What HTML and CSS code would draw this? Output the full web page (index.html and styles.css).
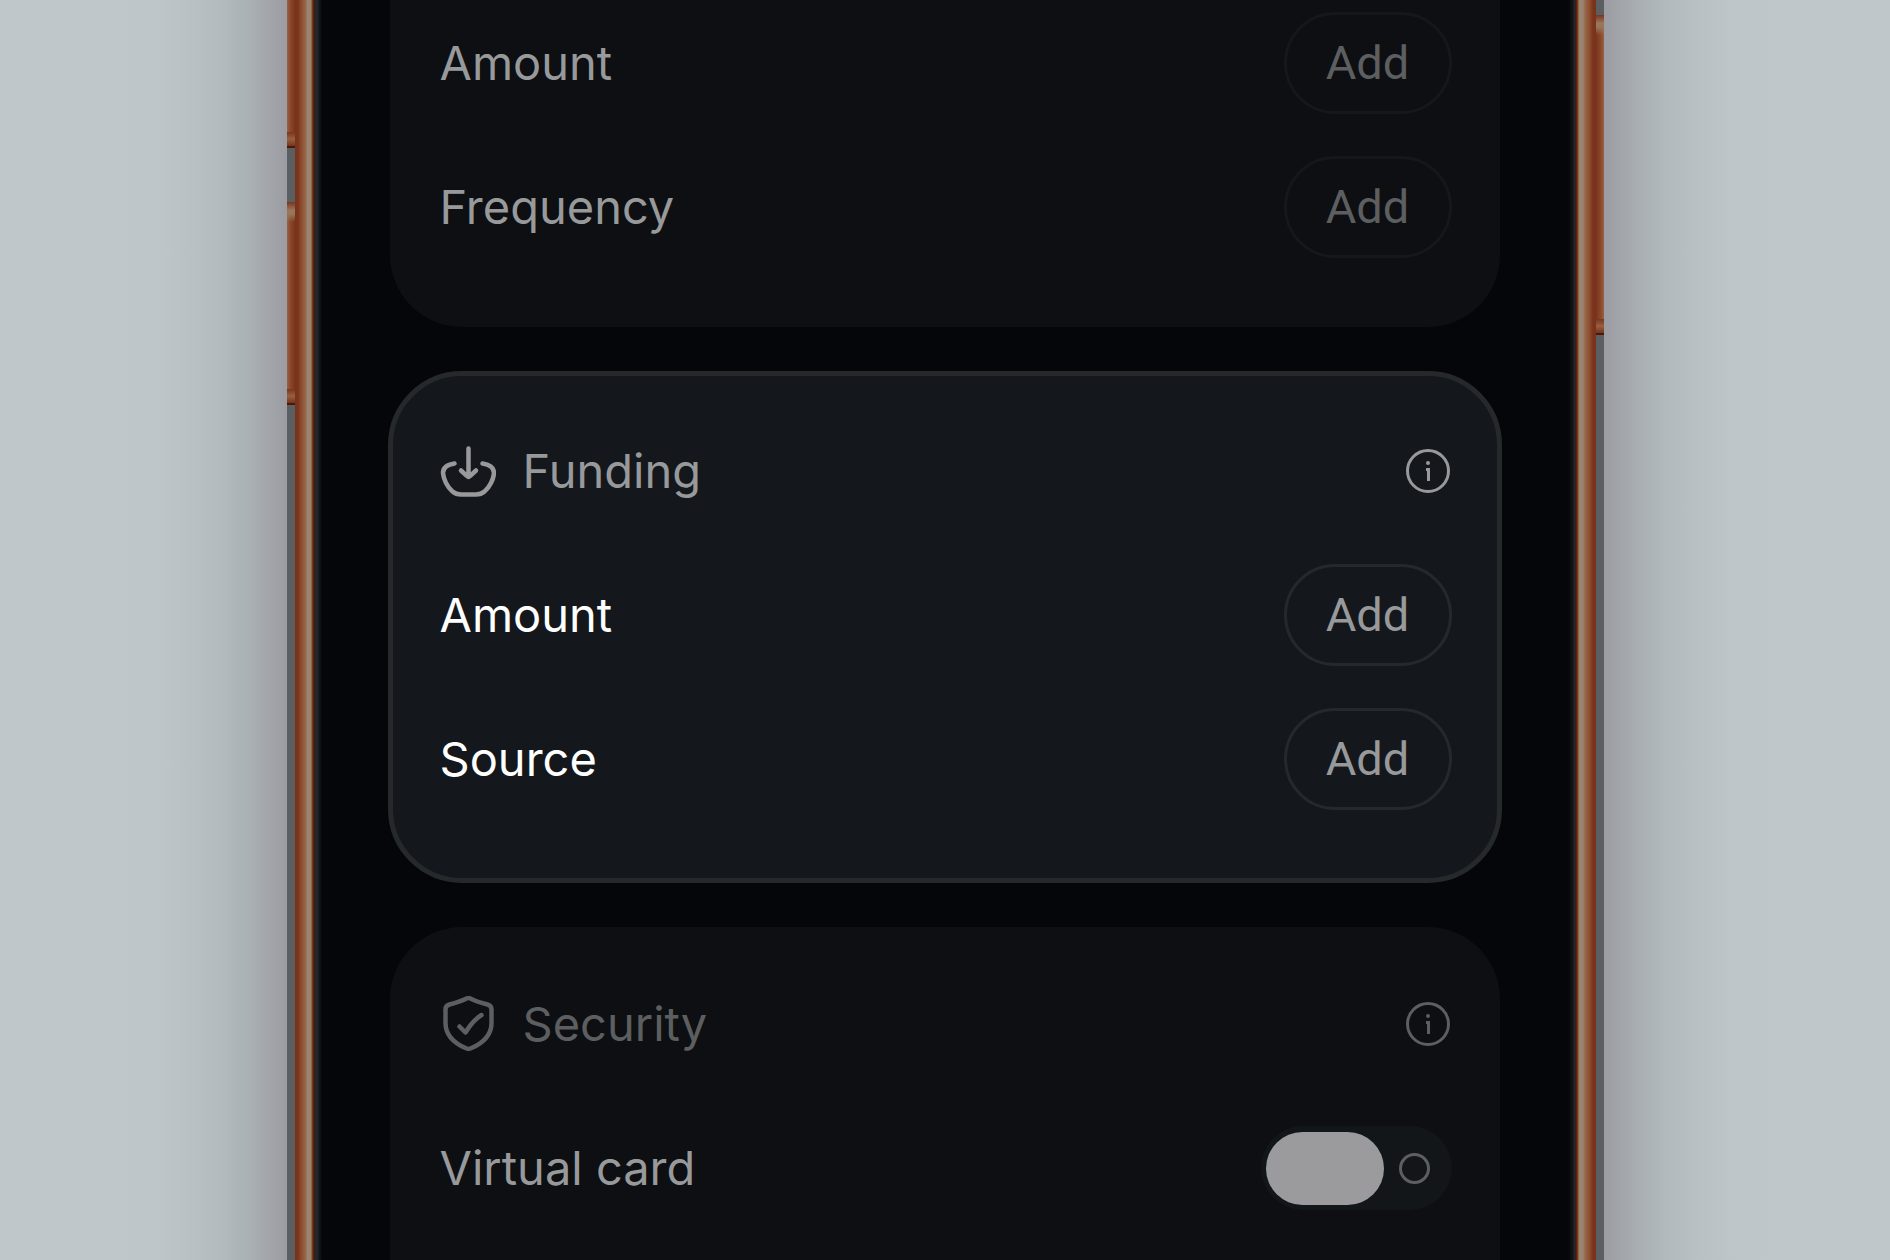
FILE: index.html
```html
<!DOCTYPE html>
<html lang="en">
<head>
  <meta charset="UTF-8">
  <meta name="viewport" content="width=device-width, initial-scale=1">
  <title>Card setup</title>
  <link rel="stylesheet" href="styles.css">
</head>
<body>
  <div class="stage">
    <div class="shade shade-left"></div>

    <div class="phone">
      <div class="keys keys-left">
        <span class="key key-up"></span>
        <span class="key key-down"></span>
      </div>
      <div class="rail rail-left"></div>

      <main class="screen">
        <section class="card card-first dimmed">
          <div class="row">
            <span class="label">Amount</span>
            <button class="add" type="button">Add</button>
          </div>
          <div class="row">
            <span class="label">Frequency</span>
            <button class="add" type="button">Add</button>
          </div>
        </section>

        <section class="card card-active">
          <div class="row">
            <h2 class="title">
              <svg class="icon" viewBox="0 0 56 56" aria-hidden="true">
                <path d="M14.500 20.500C8 21.500 3 24.500 3 30C3.500 36 7 44 12.500 48.500C15 50.700 17.500 51.500 21 51.500H36C39.500 51.500 42 50.700 44.500 48.500C50 44 53.500 36 54 30C54 24.500 49 21.500 42.500 20.500"/>
                <path d="M28.500 5.500V34M21 27.500L26.500 32.700Q28.500 34.600 30.500 32.700L36 27.500"/>
              </svg>
              Funding
            </h2>
            <button class="info" type="button" aria-label="About funding">
              <svg viewBox="0 0 44 44" aria-hidden="true">
                <circle cx="22" cy="22" r="20.500"/>
                <path d="M20 20.500H22.500V32"/>
                <circle class="dot" cx="22" cy="14" r="2"/>
              </svg>
            </button>
          </div>
          <div class="row">
            <span class="label">Amount</span>
            <button class="add" type="button">Add</button>
          </div>
          <div class="row">
            <span class="label">Source</span>
            <button class="add" type="button">Add</button>
          </div>
        </section>

        <section class="card card-last dimmed">
          <div class="row">
            <h2 class="title">
              <svg class="icon" viewBox="0 0 56 56" aria-hidden="true">
                <path d="M26.500 2.600Q28.500 1.600 30.500 2.600C36 5.500 41 7 47.500 8.500Q51.500 9.500 51.500 13.500V27C51.500 40 41 48 31 52.300Q28.500 53.500 26 52.300C16 48 5.500 40 5.500 27V13.500Q5.500 9.500 9.500 8.500C16 7 21 5.500 26.500 2.600Z"/>
                <path d="M19.500 30.500L25.500 36.500C30 29 35 23 41.500 19"/>
              </svg>
              Security
            </h2>
            <button class="info" type="button" aria-label="About security">
              <svg viewBox="0 0 44 44" aria-hidden="true">
                <circle cx="22" cy="22" r="20.500"/>
                <path d="M20 20.500H22.500V32"/>
                <circle class="dot" cx="22" cy="14" r="2"/>
              </svg>
            </button>
          </div>
          <div class="row">
            <label class="label" for="virtualCard">Virtual card</label>
            <input class="switch" type="checkbox" role="switch" id="virtualCard">
          </div>
        </section>
      </main>

      <div class="rail rail-right"></div>
      <div class="keys keys-right">
        <span class="key key-power"></span>
      </div>
    </div>

    <div class="shade shade-right"></div>
  </div>
</body>
</html>
```
FILE: styles.css
```css
* { box-sizing: border-box; }

body { margin: 0; background: #c0c7ca; font-family: Inter, "Liberation Sans", sans-serif; }

.stage { display: flex; height: 100vh; overflow: hidden; }

/* soft shadow on both sides of the device */
.shade { flex: 1; }
.shade-left { background: linear-gradient(to left, #9c9ca2 0, #a2a6aa 18px, #a9afb3 36px, #b1b9bc 60px, #b9c0c3 90px, #bec5c8 125px, #c0c7ca 170px); }
.shade-right { background: linear-gradient(to right, #9c9ca2 0, #a2a6aa 18px, #a9afb3 36px, #b1b9bc 60px, #b9c0c3 90px, #bec5c8 125px, #c0c7ca 170px); }

.phone { display: flex; width: 100%; max-width: 1317px; background: #04060a; }

.keys { display: flex; flex-direction: column; width: 8px; background: #5b5f61; }
.key { display: flex; flex: none; flex-direction: column; justify-content: space-between; }
.keys-left .key { background: linear-gradient(to right, #966346 0, #8c4a2c 3px, #7a341c 8px); }
.keys-right .key { background: linear-gradient(to left, #966346 0, #8c4a2c 3px, #7a341c 8px); }
.key-up { height: 148px; }
.key-down { height: 203px; margin-top: 54px; }
.key-power { height: 320px; margin-top: 15px; }
.key::before, .key::after { content: ""; display: block; }
.key::before { height: 20px; background: linear-gradient(#7a341c, #98765c 40%, #98765c 60%, transparent); }
.key-up::before { visibility: hidden; }
.key::after { height: 14px; border-bottom: 2px solid #4a1807; background: linear-gradient(#7a341c, #96603f 50%, #7a341c); }

.rail { width: 27px; flex: none; }
.rail-left { background: linear-gradient(to right, #76331b 0, #7a341c 3px, #8c4a2c 6px, #96694b 11px, #988472 12px, #988472 16px, #8a4020 17px, #4a1807 19px, #22272a 20px, #22272a 23px, #121519 24px, #0c0f12 26px, #04060a 27px); }
.rail-right { background: linear-gradient(to left, #76331b 0, #7a341c 3px, #8c4a2c 6px, #96694b 11px, #988472 13px, #988472 17px, #8a4020 18px, #4a1807 20px, #22272a 21px, #22272a 22px, #121519 23px, #0c0f12 26px, #04060a 27px); }

.screen { flex: 1; display: flex; flex-direction: column; gap: 44px; padding: 0 69px 0 68px; }

.card { display: flex; flex-direction: column; flex: none; gap: 42px; padding: 46px 48px 69px 50px; border-radius: 72px; background: #0d0f12; }
.card-first { padding-top: 12px; border-radius: 0 0 72px 72px; }
.card-active { margin: 0 -2px; padding: 44px 45px 68px 47px; border: 5px solid #25292c; border-radius: 74px; background: #14181c; }
.card-last { padding-bottom: 240px; }

.row { display: flex; align-items: center; justify-content: space-between; height: 102px; }

.label { color: #fff; font-size: 47px; line-height: 56px; }
.title { display: flex; align-items: center; gap: 27px; margin: 0; color: #97999b; font-size: 47px; font-weight: 400; line-height: 56px; }
.icon { width: 56px; height: 56px; fill: none; stroke: currentColor; stroke-width: 4.5; stroke-linecap: round; stroke-linejoin: round; }

.add { width: 168px; height: 102px; padding: 0; border: 3px solid #25292c; border-radius: 51px; background: none; color: #97999b; font-family: Roboto, Inter, sans-serif; font-size: 47px; line-height: 56px; }

.info { display: flex; padding: 0 2px; border: 0; background: none; color: #97999b; }
.info svg { width: 44px; height: 44px; fill: none; stroke: currentColor; stroke-width: 3; }
.info .dot { fill: currentColor; stroke: none; }

.switch { appearance: none; display: flex; align-items: center; width: 191px; height: 84px; margin: 0; padding: 0 5px; border-radius: 42px; background: #121619; }
.switch::before { content: ""; width: 118px; height: 73px; border-radius: 37px; background: #9b9b9d; }
.switch::after { content: ""; width: 31px; height: 31px; margin-left: 15px; border: 3px solid #5c5e60; border-radius: 50%; box-sizing: border-box; }
.switch::before, .switch::after { box-sizing: border-box; flex: none; }

.dimmed .label { color: #97999b; }
.dimmed .title, .dimmed .add, .dimmed .info { color: #5c5e60; }
.dimmed .add { border-color: #14181b; }
```
